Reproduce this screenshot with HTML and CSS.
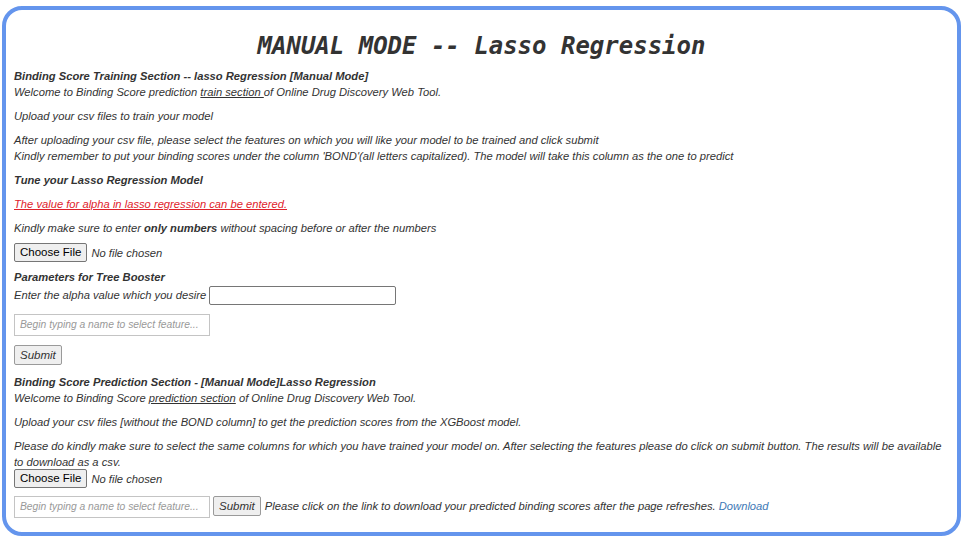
FILE: index.html
```html
<!DOCTYPE html>
<html>
<head>
<meta charset="utf-8">
<link rel="stylesheet" href="styles.css">
</head>
<body>
<div class="frame">
  <h1 class="title">MANUAL MODE -- Lasso Regression</h1>

  <div class="block">
    <div class="heading">Binding Score Training Section -- lasso Regression [Manual Mode]</div>
    <div>Welcome to Binding Score prediction <span class="ul">train section </span>of Online Drug Discovery Web Tool.</div>
  </div>
  <p class="block">Upload your csv files to train your model</p>
  <p class="block">After uploading your csv file, please select the features on which you will like your model to be trained and click submit<br>Kindly remember to put your binding scores under the column 'BOND'(all letters capitalized). The model will take this column as the one to predict</p>
  <p class="block heading">Tune your Lasso Regression Model</p>
  <p class="block red">The value for alpha in lasso regression can be entered.</p>
  <p class="block">Kindly make sure to enter <b class="strong">only numbers</b> without spacing before or after the numbers</p>

  <div class="filerow"><span class="filebtn">Choose File</span><span class="nofile">No file chosen</span></div>

  <div class="heading params">Parameters for Tree Booster</div>
  <div class="alpharow"><span>Enter the alpha value which you desire</span><span class="alphainput"></span></div>

  <div class="featurerow"><span class="feature">Begin typing a name to select feature...</span></div>
  <div class="submitrow"><span class="btn">Submit</span></div>

  <div class="block">
    <div class="heading">Binding Score Prediction Section - [Manual Mode]Lasso Regression</div>
    <div>Welcome to Binding Score <span class="ul">prediction section</span> of Online Drug Discovery Web Tool.</div>
  </div>
  <p class="block">Upload your csv files [without the BOND column] to get the prediction scores from the XGBoost model.</p>
  <p class="block tight">Please do kindly make sure to select the same columns for which you have trained your model on. After selecting the features please do click on submit button. The results will be available to download as a csv.</p>
  <div class="filerow2"><span class="filebtn">Choose File</span><span class="nofile">No file chosen</span></div>

  <div class="bottomrow">
    <span class="feature">Begin typing a name to select feature...</span>
    <span class="btn">Submit</span>
    <span>Please click on the link to download your predicted binding scores after the page refreshes. <a class="link" href="#">Download</a></span>
  </div>
</div>
</body>
</html>
```

FILE: styles.css
```css
html, body {
  margin: 0;
  padding: 0;
  background: #fff;
}
body {
  font-family: "Liberation Sans", Arial, sans-serif;
  font-style: italic;
  font-size: 11.2px;
  line-height: 16px;
  color: #333;
}
.frame {
  margin: 6px 7px 9px 2px;
  border: 4px solid #6495ed;
  border-radius: 20px;
  padding: 0 8px 15px 8px;
  box-sizing: border-box;
  height: 530px;
}
.title {
  margin: 22px 0 8px 0;
  font-family: "DejaVu Sans Mono", "Liberation Mono", monospace;
  font-size: 24px;
  line-height: 28px;
  font-weight: bold;
  font-style: italic;
  text-align: center;
  color: #333;
}
p { margin: 0; }
.block { margin: 0 0 8px 0; }
.block.tight { margin-bottom: 0; }
.heading { font-weight: bold; }
.strong { font-weight: bold; }
.ul { text-decoration: underline; }
.red { color: #e0222b; text-decoration: underline; }
.link { color: #3d78b5; text-decoration: none; }

.filerow, .filerow2 {
  display: flex;
  align-items: center;
  height: 19px;
}
.filerow { margin: -1px 0 7px 0; }
.filerow2 { margin-top: -1px; }
.filebtn {
  font-style: normal;
  font-size: 11.5px;
  color: #000;
  background: #efefef;
  border: 1px solid #767676;
  border-radius: 2px;
  height: 17px;
  line-height: 17px;
  padding: 0 5px;
  margin-right: 4px;
}
.nofile { color: #333; }

.alpharow {
  display: flex;
  align-items: center;
  gap: 3px;
  height: 20px;
}
.alphainput {
  display: inline-block;
  width: 185px;
  height: 17px;
  border: 1px solid #767676;
  border-radius: 2px;
}
.featurerow { margin-top: 9px; display: flex; }
.feature {
  display: inline-block;
  box-sizing: border-box;
  width: 196px;
  height: 22px;
  line-height: 20px;
  border: 1px solid #c4c4c4;
  padding: 0 5px;
  font-size: 10.3px;
  color: #999;
  white-space: nowrap;
  overflow: hidden;
}
.submitrow { margin-top: 9px; margin-bottom: 9px; display: flex; }
.btn {
  display: inline-block;
  box-sizing: border-box;
  height: 20px;
  line-height: 18px;
  padding: 0 5px;
  background: #efefef;
  border: 1px solid #9a9a9a;
  border-radius: 2px;
  color: #333;
  font-size: 11.5px;
}
.bottomrow {
  margin-top: 8px;
  display: flex;
  align-items: flex-start;
  gap: 3px;
}
.bottomrow > span:last-child { margin-top: 2px; margin-left: 1px; }
```
